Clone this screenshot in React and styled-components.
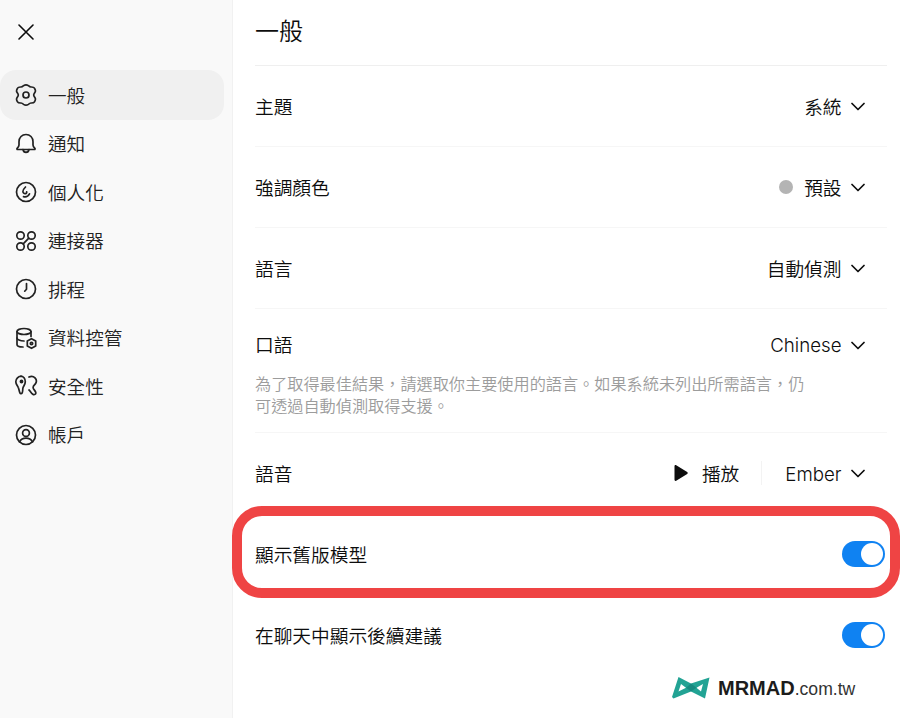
import React from "react";
import styled, { createGlobalStyle } from "styled-components";

const GlobalStyle = createGlobalStyle`
  html, body {
    margin: 0;
    padding: 0;
    background: #fff;
  }
  body {
    font-family: "Inter", "Noto Sans CJK TC", sans-serif;
    color: #0d0d0d;
  }
`;

const Page = styled.div`
  position: relative;
  display: flex;
  width: 900px;
  height: 718px;
  overflow: hidden;
  background: #fff;
`;

const Sidebar = styled.aside`
  flex: 0 0 233px;
  box-sizing: border-box;
  background: #f9f9f9;
  border-right: 1px solid #f1f1f1;
  padding-right: 8px;
`;

const CloseButton = styled.button`
  display: flex;
  align-items: center;
  justify-content: center;
  width: 52px;
  height: 70px;
  padding: 0 0 6px;
  border: none;
  background: none;
  color: #0d0d0d;
`;

const NavList = styled.nav`
  display: flex;
  flex-direction: column;
`;

const NavItem = styled.div`
  display: flex;
  align-items: center;
  gap: 10px;
  height: 50px;
  margin-bottom: -1.5px;
  padding-left: 14px;
  border-radius: 16px;
  font-size: 18.6px;
  font-weight: 350;
  color: #222;
  background: ${(p) => (p.$active ? "#f0f0f0" : "transparent")};
  svg {
    flex: none;
  }
`;

const NavLabel = styled.span`
  padding-bottom: 2px;
`;

const Main = styled.main`
  flex: 1;
  padding: 0 13px 0 22px;
`;

const Title = styled.h1`
  margin: 0;
  height: 65px;
  line-height: 63px;
  font-size: 24px;
  font-weight: 350;
  border-bottom: 1px solid #efefef;
`;

const Row = styled.div`
  position: relative;
  display: flex;
  align-items: center;
  justify-content: space-between;
  height: 80px;
  padding-right: ${(p) => (p.$toggle ? 2 : 22.5)}px;
  border-bottom: 1px solid ${(p) => (p.$flat ? "transparent" : "#f6f6f6")};
`;

const TallRow = styled.div`
  padding: 24px 0 15px;
  border-bottom: 1px solid #f6f6f6;
`;

const TallHead = styled.div`
  display: flex;
  align-items: center;
  justify-content: space-between;
  height: 24px;
  padding-right: 22.5px;
`;

const Label = styled.span`
  padding-bottom: ${(p) => (p.$lift ? 4 : 2)}px;
  font-size: 18.7px;
  font-weight: 350;
`;

const Hint = styled.p`
  width: 560px;
  margin: 16px 0 0;
  font-size: 16.17px;
  line-height: 22px;
  font-weight: 350;
  color: #9c9c9c;
`;

const Value = styled.div`
  display: flex;
  align-items: center;
  gap: 9px;
  font-size: 18.7px;
  font-weight: 350;
`;

const CjkText = styled.span`
  padding-bottom: 2px;
`;

const LatinText = styled.span`
  padding-top: ${(p) => (p.$drop ? 2 : 1)}px;
`;

const Dot = styled.span`
  width: 14px;
  height: 14px;
  margin-right: 2px;
  border-radius: 50%;
  background: #b4b4b4;
`;

const PlayButton = styled.div`
  display: flex;
  align-items: center;
  gap: 14px;
  font-size: 18.7px;
  font-weight: 350;
`;

const VoiceGroup = styled.div`
  display: flex;
  align-items: center;
`;

const Separator = styled.span`
  width: 1px;
  height: 24px;
  margin: 0 23px 0 22px;
  background: #f3f3f3;
`;

const Toggle = styled.span`
  display: flex;
  justify-content: flex-end;
  align-items: center;
  box-sizing: border-box;
  width: 43px;
  height: 26px;
  padding: 2px;
  border-radius: 13px;
  background: #0f82f2;
  &::after {
    content: "";
    width: 22px;
    height: 22px;
    border-radius: 50%;
    background: #fff;
  }
`;

const Highlight = styled.div`
  position: absolute;
  top: -8px;
  bottom: -4px;
  left: -23px;
  right: -13px;
  border: 10px solid #ef4444;
  border-radius: 30px;
  pointer-events: none;
`;

const Watermark = styled.div`
  position: absolute;
  left: 672px;
  top: 677px;
  display: flex;
  align-items: center;
  gap: 8px;
  height: 22px;
  font-family: "Liberation Sans", Arial, sans-serif;
  color: #1c1c1c;
`;

const Brand = styled.span`
  font-size: 20px;
  font-weight: 700;
`;

const Domain = styled.span`
  font-size: 17.6px;
  color: #333;
`;

const Icon = ({ children }) => (
  <svg width="24" height="24" viewBox="0 0 24 24" fill="none" stroke="currentColor" strokeWidth="1.7" strokeLinecap="round" strokeLinejoin="round">
    {children}
  </svg>
);

const Chevron = () => (
  <svg width="14" height="9" viewBox="0 0 14 9" fill="none" stroke="#0d0d0d" strokeWidth="1.7" strokeLinecap="round" strokeLinejoin="round">
    <path d="M1 1.5l6 6 6-6" />
  </svg>
);

const navItems = [
  {
    label: "一般",
    icon: (
      <>
        <path d="M9.600 2.700C11 1.600 13 1.600 14.400 2.700 15.200 3.400 15.900 4 17 4 18.200 4 19.700 3.800 20.500 5.200 21.500 6.800 21.900 8 21 9.300 20.400 10.200 19.700 11 19.700 12 19.700 13 20.400 13.800 21 14.700 21.900 16 21.500 17.200 20.500 18.800 19.700 20.200 18.200 20 17 20 15.900 20 15.200 20.600 14.400 21.300 13 22.400 11 22.400 9.600 21.300 8.800 20.600 8.100 20 7 20 5.800 20 4.300 20.200 3.500 18.800 2.500 17.200 2.100 16 3 14.700 3.600 13.800 4.300 13 4.300 12 4.300 11 3.600 10.200 3 9.300 2.100 8 2.500 6.800 3.500 5.200 4.300 3.800 5.800 4 7 4 8.100 4 8.800 3.400 9.600 2.700Z" />
        <circle cx="12" cy="12" r="3" />
      </>
    ),
  },
  {
    label: "通知",
    icon: (
      <>
        <path d="M12 2.500c-4 0-7 3-7 7.200v3.300c0 1.500-1 2.500-1.900 3.400-.4.4-.1 1.100.5 1.100h16.800c.6 0 .9-.7.5-1.100-.9-.9-1.900-1.900-1.900-3.400V9.700c0-4.200-3-7.200-7-7.200z" />
        <path d="M9 17.500c.3 1.700 1.500 2.800 3 2.800s2.700-1.100 3-2.800" />
      </>
    ),
  },
  {
    label: "個人化",
    icon: (
      <>
        <circle cx="12" cy="12" r="9.500" />
        <path d="M11.500 7c-1.300 1.300-2.600 2.900-2.600 4.500 0 1.500 1.300 2.300 2.500 2.100 1-.2 1.500-1 1.300-1.800" />
        <path d="M9.500 16.600c2.400.6 4.800-.5 6-2.800" />
      </>
    ),
  },
  {
    label: "連接器",
    icon: (
      <>
        <circle cx="6.500" cy="6.500" r="3.700" />
        <circle cx="17.500" cy="6.500" r="3.700" />
        <circle cx="6.500" cy="17.500" r="3.700" />
        <circle cx="17.500" cy="17.500" r="3.700" />
        <path d="M9.200 14.800l5.600-5.600" />
      </>
    ),
  },
  {
    label: "排程",
    icon: (
      <>
        <circle cx="12" cy="12" r="9.500" />
        <path d="M12.500 6.500v5.700l-1.800 2" />
      </>
    ),
  },
  {
    label: "資料控管",
    icon: (
      <>
        <ellipse cx="10" cy="5.500" rx="7" ry="3" />
        <path d="M3 5.500v13c0 1.500 1.500 2.500 6 2.500" />
        <path d="M17 5.500v5" />
        <path d="M3 12c0 1.500 3 3 7 3" />
        <path d="M17.500 12.700l4.200 2.400v4.800l-4.200 2.400-4.200-2.400v-4.800z" />
        <circle cx="17.500" cy="17.500" r="1.200" />
      </>
    ),
  },
  {
    label: "安全性",
    icon: (
      <>
        <path d="M7.500 2.200C4.300 2.200 1.800 4.700 1.800 7.800c0 2.400 1.500 3.700 2.400 5.500.9 1.700.8 3.700 1.700 5.500.5 1.100 1.600 1.200 2.200.2.900-1.500.4-3.600.9-5.300.6-1.900 2.300-3.300 2.300-5.900 0-3.100-1.800-5.600-4.800-5.600z" />
        <circle cx="7.500" cy="7.500" r="1.100" fill="currentColor" />
        <path d="M15 3c2.300-1.200 4.400-.8 6 .8 1.500 1.600 1.700 3.900.6 5.700-.9 1.500-2.500 2.200-2.500 3.900 0 1.900 2.300 3.200 2.700 5.200.3 1.600-1.500 2.600-3 1.600-1.700-1.100-2.500-3.100-3.800-4.200" />
      </>
    ),
  },
  {
    label: "帳戶",
    icon: (
      <>
        <circle cx="12" cy="12" r="9.500" />
        <circle cx="12" cy="10" r="3.400" />
        <path d="M5.500 18.800c1.500-2.600 4-3.600 6.500-3.600s5 1 6.500 3.600" />
      </>
    ),
  },
];

const Logo = () => (
  <svg width="38" height="22" viewBox="0 0 38 22">
    <path fill="#22a394" fillRule="evenodd" d="M6.500 0L19 6.500 37.500.5 33 21.500 19 14.500 1.500 21.500 0 20zM9 7L6.500 14.500 14 10.800zM31 7L24.500 10.800 29 14.500z" />
    <path fill="#168a80" d="M14 10.800L19 6.500 24.500 10.800 19 14.500z" />
  </svg>
);

const App = () => (
  <Page>
    <GlobalStyle />
    <Sidebar>
      <CloseButton aria-label="關閉">
        <svg width="16" height="16" viewBox="0 0 16 16" fill="none" stroke="currentColor" strokeWidth="1.600" strokeLinecap="round">
          <path d="M1 1l14 14M15 1L1 15" />
        </svg>
      </CloseButton>
      <NavList>
        {navItems.map((item, i) => (
          <NavItem key={item.label} $active={i === 0}>
            <Icon>{item.icon}</Icon>
            <NavLabel>{item.label}</NavLabel>
          </NavItem>
        ))}
      </NavList>
    </Sidebar>
    <Main>
      <Title>一般</Title>
      <Row>
        <Label>主題</Label>
        <Value>
          <CjkText>系統</CjkText>
          <Chevron />
        </Value>
      </Row>
      <Row>
        <Label>強調顏色</Label>
        <Value>
          <Dot />
          <CjkText>預設</CjkText>
          <Chevron />
        </Value>
      </Row>
      <Row>
        <Label>語言</Label>
        <Value>
          <CjkText>自動偵測</CjkText>
          <Chevron />
        </Value>
      </Row>
      <TallRow>
        <TallHead>
          <Label $lift>口語</Label>
          <Value>
            <LatinText>Chinese</LatinText>
            <Chevron />
          </Value>
        </TallHead>
        <Hint>為了取得最佳結果，請選取你主要使用的語言。如果系統未列出所需語言，仍可透過自動偵測取得支援。</Hint>
      </TallRow>
      <Row $flat>
        <Label>語音</Label>
        <VoiceGroup>
          <PlayButton>
            <svg width="14" height="16" viewBox="0 0 14 16">
              <path d="M0.500 1.200c0-.9.900-1.400 1.700-.9l11 6.800c.7.400.7 1.400 0 1.800l-11 6.800c-.8.500-1.700 0-1.700-.9z" fill="#0d0d0d" />
            </svg>
            <CjkText>播放</CjkText>
          </PlayButton>
          <Separator />
          <Value>
            <LatinText $drop>Ember</LatinText>
            <Chevron />
          </Value>
        </VoiceGroup>
      </Row>
      <Row $flat $toggle>
        <Highlight />
        <Label>顯示舊版模型</Label>
        <Toggle />
      </Row>
      <Row $flat $toggle>
        <Label>在聊天中顯示後續建議</Label>
        <Toggle />
      </Row>
    </Main>
    <Watermark>
      <Logo />
      <span>
        <Brand>MRMAD</Brand>
        <Domain>.com.tw</Domain>
      </span>
    </Watermark>
  </Page>
);

export default App;
